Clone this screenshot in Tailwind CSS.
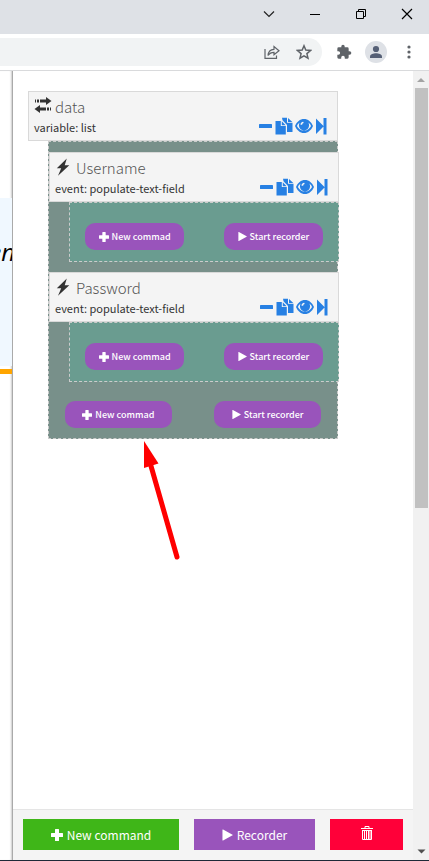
<!DOCTYPE html>
<html lang="en">
<head>
<meta charset="utf-8">
<meta name="viewport" content="width=device-width, initial-scale=1">
<title>Commands</title>
<script src="https://cdn.jsdelivr.net/npm/@tailwindcss/browser@4"></script>
</head>
<body class="relative flex h-screen flex-col overflow-hidden bg-white font-['Noto_Sans_CJK_SC','Open_Sans',sans-serif] text-[#333]">

<svg class="hidden" aria-hidden="true">
  <symbol id="minus" viewBox="0 0 14 18"><rect x="0" y="7" width="13" height="4" rx=".6"/></symbol>
  <symbol id="copy" viewBox="0 0 18 18"><path d="M.5 4H5.800v5h5v8.500H.5zM6.800 4.200L10.600 8.200H6.800zM7 .8h5v5h5.500V15H12V8L7.500 3.200zM13 1L17.300 5H13z"/></symbol>
  <symbol id="eye" viewBox="0 0 18 18"><path fill-rule="evenodd" d="M9 2C5 2 1.800 4.700 0 9c1.800 4.300 5 7 9 7S16.200 13.300 18 9C16.200 4.700 13 2 9 2zM4.700 5.600C2.900 6.700 2.300 8.300 2 9c.9 2 3.300 4.600 7 4.600S15.100 11 16 9c-.3-.7-.9-2.300-2.700-3.400.5.800.8 1.700.8 2.700a5.100 5.100 0 0 1-10.200 0c0-1 .3-1.900.8-2.700zM8.200 4.800c-1.600.1-2.700 1.300-2.700 2.900h1.700c0-1 .5-1.500 1.500-1.700z"/></symbol>
  <symbol id="step" viewBox="0 0 12 18"><path d="M1 1.500L8.500 9V1h3v16.500h-3V9.500L1 17z"/></symbol>
  <symbol id="plus" viewBox="0 0 12 12"><path d="M4 .6q0-.6.600-.6h2.800q.6 0 .6.600V4h3.400q.6 0 .6.600v2.800q0 .6-.6.600H8v3.400q0 .6-.6.600H4.600q-.6 0-.6-.6V8H.6Q0 8 0 7.400V4.600Q0 4 .6 4H4z"/></symbol>
  <symbol id="play" viewBox="0 0 12 12"><path d="M.5.400Q.5-.3 1.200.1L11.500 5.600q.6.400 0 .8L1.200 11.900q-.7.400-.7-.3z"/></symbol>
  <symbol id="bolt" viewBox="0 0 14 18"><path d="M10.800.5L.8 10.200h4.400L2 17.700 13.300 7.300H8.700z"/></symbol>
  <symbol id="transfer" viewBox="0 0 18 16"><path d="M1 2.500h1v3H1zM3 2.500h2v3H3zM6 2.500h6V0l5.500 4L12 8V5.500H6zM17 10.500h-1v3h1zM15 10.500h-2v3h2zM12 10.500H6V8L.5 12 6 16v-2.500h6z"/></symbol>
</svg>

<header class="shrink-0">
  <div class="flex h-[34px] items-start justify-end bg-[#dee1e6] pt-[6px] pr-[14px] text-black">
    <button aria-label="Search tabs" class="mr-[30px]"><svg class="size-4" viewBox="0 0 16 16" fill="none" stroke="#222" stroke-width="1.200"><path d="M3 5.500l5 5 5-5"/></svg></button>
    <button aria-label="Minimize" class="mr-[30px]"><svg class="size-4" viewBox="0 0 16 16" stroke="currentColor"><path d="M3 8.500h10"/></svg></button>
    <button aria-label="Restore" class="mr-[30px]"><svg class="size-4" viewBox="0 0 16 16" fill="none" stroke="currentColor"><path d="M3.500 5.500h7v7h-7zM5.500 5V3.500h7v7H11"/></svg></button>
    <button aria-label="Close"><svg class="size-4" viewBox="0 0 16 16" stroke="currentColor" stroke-width="1.200"><path d="M3 3l10 10M13 3L3 13"/></svg></button>
  </div>
  <div class="flex h-[37px] items-center border-b border-[#d9dadc] bg-white pr-[12px] text-[#5f6368]">
    <div class="flex h-7 flex-1 items-center justify-end gap-4 rounded-r-full bg-[#f1f3f4] pr-[10px]">
      <button aria-label="Share"><svg class="size-4" viewBox="0 0 16 16" fill="none" stroke="currentColor" stroke-width="1.200"><path d="M1 5v9.300h11.500V11.500M4 11.500c.3-4 2.500-6 6-6.200V2.500L15 6.800l-5 4V8.300c-2.700 0-4.500.9-6 3.200z"/></svg></button>
      <button aria-label="Bookmark"><svg class="size-4" viewBox="0 0 16 16" fill="none" stroke="currentColor" stroke-width="1.500"><path d="M8 1.800l1.800 4.300 4.700.4-3.600 3.100 1.100 4.600L8 11.800l-4 2.400 1.100-4.600L1.500 6.500l4.700-.4z"/></svg></button>
    </div>
    <button aria-label="Extensions" class="ml-[14px]"><svg class="size-4" viewBox="0 0 24 24" fill="currentColor"><path d="M20.500 11H19V7a2 2 0 0 0-2-2h-4V3.500a2.500 2.500 0 0 0-5 0V5H4a2 2 0 0 0-2 2v3.800h1.500a2.700 2.700 0 0 1 0 5.400H2V20a2 2 0 0 0 2 2h3.800v-1.500a2.700 2.700 0 0 1 5.400 0V22H17a2 2 0 0 0 2-2v-4h1.500a2.500 2.500 0 0 0 0-5z"/></svg></button>
    <button aria-label="Profile" class="ml-[13px]"><svg class="size-[22px]" viewBox="0 0 22 22"><circle cx="11" cy="11" r="11" fill="#dee1e6"/><g fill="#566076"><circle cx="11" cy="8" r="3.100"/><path d="M5 17v-1.500c0-2 3.500-3.200 6-3.200s6 1.200 6 3.200V17z"/></g></svg></button>
    <button aria-label="Menu" class="ml-[14px]"><svg class="size-4" viewBox="0 0 16 16" fill="currentColor"><circle cx="8" cy="3" r="1.600"/><circle cx="8" cy="8" r="1.600"/><circle cx="8" cy="13" r="1.600"/></svg></button>
  </div>
</header>

<div class="flex min-h-0 flex-1 border-b border-[#1e2937]">
  <div class="flex w-[13px] shrink-0 flex-col overflow-hidden border-r border-[#aaa] pt-[127px] shadow-[inset_-2px_0_2px_-1px_#ccc]">
    <div class="flex h-[168px] justify-end bg-[#f0f8ff] pt-[36px] font-['Open_Sans',sans-serif] text-[24px] leading-9 text-black italic"><span class="-mr-[3px]">en</span></div>
    <div class="mt-[3px] h-[5px] shrink-0 bg-[#ffa500]"></div>
  </div>

  <main class="flex min-w-0 flex-1 flex-col">
    <div class="min-h-0 flex-1 overflow-hidden pt-5 pr-[75px] pl-[15px]">
      <section>
        <div class="flex h-[50px] items-end justify-between border border-[#d9d9d9] bg-[#f4f4f4] pr-[10px] pl-[5px]">
          <div class="pb-[3px]">
            <h2 class="flex items-center gap-[3px] text-[15px] leading-5 font-light text-[#555]"><svg class="mb-1 h-4 w-[18px] fill-[#333]"><use href="#transfer"/></svg>data</h2>
            <p class="text-[11px] leading-5">variable: list</p>
          </div>
          <div class="flex gap-[2px] pb-[5px] text-[#2780e3]">
            <button aria-label="Collapse"><svg class="h-[18px] w-[14px] fill-current"><use href="#minus"/></svg></button>
            <button aria-label="Copy"><svg class="size-[18px] fill-current"><use href="#copy"/></svg></button>
            <button aria-label="View"><svg class="size-[18px] fill-current"><use href="#eye"/></svg></button>
            <button aria-label="Step"><svg class="h-[18px] w-3 fill-current"><use href="#step"/></svg></button>
          </div>
        </div>

        <div class="ml-5 border border-dashed border-[#ccc] bg-[#78908a] pt-[10px]">
          <section class="-mr-[2px] mb-[10px]">
            <div class="flex h-[50px] items-end justify-between border border-[#d9d9d9] bg-[#f4f4f4] pr-[10px] pl-[5px]">
              <div class="pb-[3px]">
                <h3 class="flex items-center gap-[6px] text-[15px] leading-5 font-light text-[#555]"><svg class="mb-[2px] ml-px h-[18px] w-[14px] fill-[#333]"><use href="#bolt"/></svg>Username</h3>
                <p class="text-[11px] leading-5">event: populate-text-field</p>
              </div>
              <div class="flex gap-[2px] pb-[5px] text-[#2780e3]">
                <button aria-label="Collapse"><svg class="h-[18px] w-[14px] fill-current"><use href="#minus"/></svg></button>
                <button aria-label="Copy"><svg class="size-[18px] fill-current"><use href="#copy"/></svg></button>
                <button aria-label="View"><svg class="size-[18px] fill-current"><use href="#eye"/></svg></button>
                <button aria-label="Step"><svg class="h-[18px] w-3 fill-current"><use href="#step"/></svg></button>
              </div>
            </div>
            <div class="ml-5 flex h-[60px] items-start justify-between border border-dashed border-[#ccc] bg-[#6a9c90] px-[15px] pt-5 text-[9px] font-medium text-white">
              <button class="flex h-[27px] w-5/12 items-center justify-center gap-[3px] rounded-[10px] bg-[#9954bb]"><svg class="size-[10px] fill-current"><use href="#plus"/></svg>New commad</button>
              <button class="flex h-[27px] w-5/12 items-center justify-center gap-[3px] rounded-[10px] bg-[#9954bb]"><svg class="size-[9px] fill-current"><use href="#play"/></svg>Start recorder</button>
            </div>
          </section>

          <section class="-mr-[2px]">
            <div class="flex h-[50px] items-end justify-between border border-[#d9d9d9] bg-[#f4f4f4] pr-[10px] pl-[5px]">
              <div class="pb-[3px]">
                <h3 class="flex items-center gap-[6px] text-[15px] leading-5 font-light text-[#555]"><svg class="mb-[2px] ml-px h-[18px] w-[14px] fill-[#333]"><use href="#bolt"/></svg>Password</h3>
                <p class="text-[11px] leading-5">event: populate-text-field</p>
              </div>
              <div class="flex gap-[2px] pb-[5px] text-[#2780e3]">
                <button aria-label="Collapse"><svg class="h-[18px] w-[14px] fill-current"><use href="#minus"/></svg></button>
                <button aria-label="Copy"><svg class="size-[18px] fill-current"><use href="#copy"/></svg></button>
                <button aria-label="View"><svg class="size-[18px] fill-current"><use href="#eye"/></svg></button>
                <button aria-label="Step"><svg class="h-[18px] w-3 fill-current"><use href="#step"/></svg></button>
              </div>
            </div>
            <div class="ml-5 flex h-[60px] items-start justify-between border border-dashed border-[#ccc] bg-[#6a9c90] px-[15px] pt-5 text-[9px] font-medium text-white">
              <button class="flex h-[27px] w-5/12 items-center justify-center gap-[3px] rounded-[10px] bg-[#9954bb]"><svg class="size-[10px] fill-current"><use href="#plus"/></svg>New commad</button>
              <button class="flex h-[27px] w-5/12 items-center justify-center gap-[3px] rounded-[10px] bg-[#9954bb]"><svg class="size-[9px] fill-current"><use href="#play"/></svg>Start recorder</button>
            </div>
          </section>

          <div class="flex justify-between px-4 pt-[19px] pb-[10px] text-[9px] font-medium text-white">
            <button class="flex h-[27px] w-5/12 items-center justify-center gap-[3px] rounded-[10px] bg-[#9954bb]"><svg class="size-[10px] fill-current"><use href="#plus"/></svg>New commad</button>
            <button class="flex h-[27px] w-5/12 items-center justify-center gap-[3px] rounded-[10px] bg-[#9954bb]"><svg class="size-[9px] fill-current"><use href="#play"/></svg>Start recorder</button>
          </div>
        </div>
      </section>
    </div>

    <footer class="grid shrink-0 grid-cols-[156fr_121fr_73fr] gap-[15px] border-t border-[#e5e5e5] bg-[#f4f4f4] px-[10px] pt-[9px] pb-[10px] text-[12px] text-white">
      <button class="flex h-[31px] items-center justify-center gap-1 bg-[#3fb618]"><svg class="size-3 fill-current"><use href="#plus"/></svg>New command</button>
      <button class="flex h-[31px] items-center justify-center gap-1 bg-[#9954bb]"><svg class="h-3 w-[11px] fill-current"><use href="#play"/></svg>Recorder</button>
      <button aria-label="Delete" class="flex h-[31px] items-center justify-center bg-[#ff0039]"><svg class="mb-[3px] h-[14px] w-3" viewBox="0 0 12 14" fill="none" stroke="currentColor"><path d="M0 2.500h12M4 2V.500h4V2M1 4.500h10M1.500 5v8.500h9V5M3.500 5v8M5.500 5v8M7.500 5v8M9 5v8"/></svg></button>
    </footer>
  </main>

  <div class="flex w-4 shrink-0 flex-col items-center bg-[#f1f1f1]" aria-hidden="true">
    <svg class="h-[17px] w-4" viewBox="0 0 16 17"><path d="M4 11h8L8 7z" fill="#a3a3a3"/></svg>
    <div class="h-[420px] w-[13px] bg-[#c1c1c1]"></div>
    <svg class="mt-auto h-[17px] w-4" viewBox="0 0 16 17"><path d="M4.500 6.500h8l-4 4z" fill="#505050"/></svg>
  </div>
</div>

<svg class="pointer-events-none absolute top-[440px] left-[140px] h-[122px] w-[42px]" viewBox="0 0 42 122" aria-hidden="true">
  <path d="M11 26L37 117" stroke="red" stroke-width="5" stroke-linecap="round"/><path d="M4 1L18.500 23.500 4 28z" fill="red"/>
</svg>
</body>
</html>
